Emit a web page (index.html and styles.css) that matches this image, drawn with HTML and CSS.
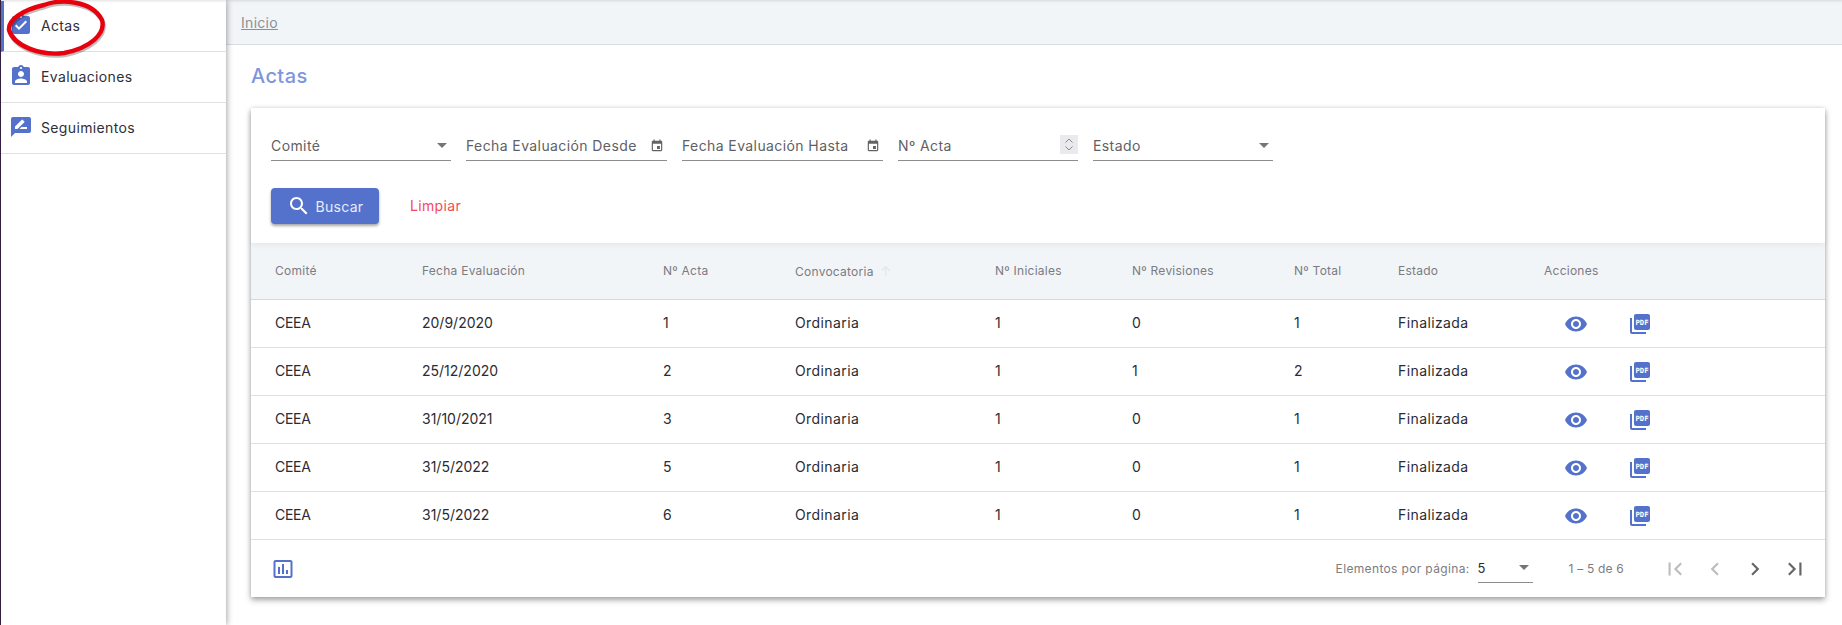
FILE: index.html

```html
<!DOCTYPE html>
<html>
<head>
<meta charset="utf-8">
<title>Actas</title>
<link rel="stylesheet" href="styles.css">
</head>
<body>
<svg class="defs" width="0" height="0">
    <symbol id="i-done" viewBox="0 0 24 24"><path d="M19 3h-4.18C14.4 1.84 13.3 1 12 1c-1.3 0-2.4.84-2.82 2H5c-1.1 0-2 .9-2 2v14c0 1.1.9 2 2 2h14c1.1 0 2-.9 2-2V5c0-1.1-.9-2-2-2zm-7 0c.55 0 1 .45 1 1s-.45 1-1 1-1-.45-1-1 .45-1 1-1zm-2 14l-4-4 1.41-1.41L10 14.17l6.59-6.59L18 9l-8 8z"/></symbol>
    <symbol id="i-ind" viewBox="0 0 24 24"><path d="M19 3h-4.18C14.4 1.84 13.3 1 12 1c-1.3 0-2.4.84-2.82 2H5c-1.1 0-2 .9-2 2v14c0 1.1.9 2 2 2h14c1.1 0 2-.9 2-2V5c0-1.1-.9-2-2-2zm-7 0c.55 0 1 .45 1 1s-.45 1-1 1-1-.45-1-1 .45-1 1-1zm0 4c1.66 0 3 1.34 3 3s-1.34 3-3 3-3-1.34-3-3 1.34-3 3-3zm6 12H6v-1.4c0-2 4-3.1 6-3.1s6 1.1 6 3.1V19z"/></symbol>
    <symbol id="i-review" viewBox="0 0 24 24"><path d="M20 2H4c-1.1 0-2 .9-2 2v18l4-4h14c1.1 0 2-.9 2-2V4c0-1.1-.9-2-2-2zM6 14v-2.47l6.88-6.88c.2-.2.51-.2.71 0l1.77 1.77c.2.2.2.51 0 .71L8.47 14H6zm12 0h-7.5l2-2H18v2z"/></symbol>
    <symbol id="i-event" viewBox="0 0 24 24"><path d="M17 12h-5v5h5v-5zM16 1v2H8V1H6v2H5c-1.11 0-1.99.9-1.99 2L3 19c0 1.1.89 2 2 2h14c1.1 0 2-.9 2-2V5c0-1.1-.9-2-2-2h-1V1h-2zm3 18H5V8h14v11z"/></symbol>
    <symbol id="i-eye" viewBox="0 0 24 24"><path d="M12 4.5C7 4.5 2.73 7.61 1 12c1.73 4.39 6 7.5 11 7.5s9.27-3.11 11-7.5c-1.73-4.39-6-7.5-11-7.5zM12 17c-2.76 0-5-2.24-5-5s2.24-5 5-5 5 2.24 5 5-2.24 5-5 5zm0-8c-1.66 0-3 1.34-3 3s1.34 3 3 3 3-1.34 3-3-1.34-3-3-3z"/></symbol>
    <symbol id="i-pdf" viewBox="0 0 24 24"><path d="M20 2H8c-1.1 0-2 .9-2 2v12c0 1.1.9 2 2 2h12c1.1 0 2-.9 2-2V4c0-1.1-.9-2-2-2zM4 6H2v14c0 1.1.9 2 2 2h14v-2H4V6z"/></symbol>
</svg>

<div class="sidebar">
    <a class="side-item active"><svg class="side-icon"><use href="#i-done"/></svg>Actas</a>
    <a class="side-item"><svg class="side-icon"><use href="#i-ind"/></svg>Evaluaciones</a>
    <a class="side-item"><svg class="side-icon"><use href="#i-review"/></svg>Seguimientos</a>
</div>

<svg class="circled" width="112" height="60" viewBox="0 0 112 60">
    <path class="circled-shadow" d="M44 5 C60 -1 92 0 102 20 C106 34 90 48 64 53 C40 56 14 46 9 30 C8 20 22 10 44 5"/>
    <path class="circled-line" d="M44 5 C60 -1 92 0 102 20 C106 34 90 48 64 53 C40 56 14 46 9 30 C8 20 22 10 44 5"/>
</svg>

<div class="main">
    <div class="breadcrumb"><a>Inicio</a></div>
    <h1 class="title">Actas</h1>

    <div class="card">
        <div class="filters">
            <div class="filter-row">
                <div class="field w-comite"><span>Comité</span><i class="caret"></i></div>
                <div class="field w-desde"><span>Fecha Evaluación Desde</span><svg class="cal"><use href="#i-event"/></svg></div>
                <div class="field w-hasta"><span>Fecha Evaluación Hasta</span><svg class="cal"><use href="#i-event"/></svg></div>
                <div class="field w-acta"><span>Nº Acta</span>
                    <svg class="spin" viewBox="0 0 18 19"><path d="M5.5 7.5 9 4 12.5 7.5M5.5 11.5 9 15 12.5 11.5"/></svg>
                </div>
                <div class="field w-estado"><span>Estado</span><i class="caret"></i></div>
            </div>
            <div class="btn-row">
                <button class="btn-search">
                    <svg viewBox="0 0 24 24"><path d="M15.5 14h-.79l-.28-.27C15.41 12.59 16 11.11 16 9.5 16 5.91 13.09 3 9.5 3S3 5.91 3 9.5 5.91 16 9.5 16c1.61 0 3.09-.59 4.23-1.57l.27.28v.79l5 4.99L20.49 19l-4.99-5zm-6 0C7.01 14 5 11.99 5 9.5S7.01 5 9.5 5 14 7.01 14 9.5 11.99 14 9.5 14z"/></svg>
                    Buscar
                </button>
                <button class="btn-clear">Limpiar</button>
            </div>
        </div>

        <table class="grid">
            <colgroup>
                <col class="c1"><col class="c2"><col class="c3"><col class="c4"><col class="c5">
                <col class="c6"><col class="c7"><col class="c8"><col class="c9"><col>
            </colgroup>
            <thead>
                <tr>
                    <th>Comité</th>
                    <th>Fecha Evaluación</th>
                    <th>Nº Acta</th>
                    <th>Convocatoria <span class="sort">↑</span></th>
                    <th>Nº Iniciales</th>
                    <th>Nº Revisiones</th>
                    <th>Nº Total</th>
                    <th>Estado</th>
                    <th>Acciones</th>
                    <th></th>
                </tr>
            </thead>
            <tbody>
                <tr>
                    <td>CEEA</td><td>20/9/2020</td><td>1</td><td>Ordinaria</td><td>1</td><td>0</td><td>1</td><td>Finalizada</td>
                    <td class="acts"><svg class="eye"><use href="#i-eye"/></svg></td>
                    <td class="acts"><svg class="pdf" viewBox="0 0 24 24"><use href="#i-pdf"/><text class="pdf-text" x="14" y="12.6">PDF</text></svg></td>
                </tr>
                <tr>
                    <td>CEEA</td><td>25/12/2020</td><td>2</td><td>Ordinaria</td><td>1</td><td>1</td><td>2</td><td>Finalizada</td>
                    <td class="acts"><svg class="eye"><use href="#i-eye"/></svg></td>
                    <td class="acts"><svg class="pdf" viewBox="0 0 24 24"><use href="#i-pdf"/><text class="pdf-text" x="14" y="12.6">PDF</text></svg></td>
                </tr>
                <tr>
                    <td>CEEA</td><td>31/10/2021</td><td>3</td><td>Ordinaria</td><td>1</td><td>0</td><td>1</td><td>Finalizada</td>
                    <td class="acts"><svg class="eye"><use href="#i-eye"/></svg></td>
                    <td class="acts"><svg class="pdf" viewBox="0 0 24 24"><use href="#i-pdf"/><text class="pdf-text" x="14" y="12.6">PDF</text></svg></td>
                </tr>
                <tr>
                    <td>CEEA</td><td>31/5/2022</td><td>5</td><td>Ordinaria</td><td>1</td><td>0</td><td>1</td><td>Finalizada</td>
                    <td class="acts"><svg class="eye"><use href="#i-eye"/></svg></td>
                    <td class="acts"><svg class="pdf" viewBox="0 0 24 24"><use href="#i-pdf"/><text class="pdf-text" x="14" y="12.6">PDF</text></svg></td>
                </tr>
                <tr>
                    <td>CEEA</td><td>31/5/2022</td><td>6</td><td>Ordinaria</td><td>1</td><td>0</td><td>1</td><td>Finalizada</td>
                    <td class="acts"><svg class="eye"><use href="#i-eye"/></svg></td>
                    <td class="acts"><svg class="pdf" viewBox="0 0 24 24"><use href="#i-pdf"/><text class="pdf-text" x="14" y="12.6">PDF</text></svg></td>
                </tr>
            </tbody>
        </table>

        <div class="foot">
            <svg class="chart" viewBox="0 0 24 24"><path d="M9 17H7v-7h2v7zm4 0h-2V7h2v10zm4 0h-2v-4h2v4zm2.5 2.1h-15V5h15v14.1zm0-16.1h-15c-1.1 0-2 .9-2 2v14c0 1.1.9 2 2 2h15c1.1 0 2-.9 2-2V5c0-1.1-.9-2-2-2z"/></svg>
            <div class="pager">
                <span class="per-page">Elementos por página:</span>
                <div class="page-size"><span>5</span><i class="caret"></i></div>
                <span class="range">1 – 5 de 6</span>
                <svg class="nav off" viewBox="0 0 24 24"><path d="M18.41 16.59L13.82 12l4.59-4.59L17 6l-6 6 6 6zM6 6h2v12H6z"/></svg>
                <svg class="nav off" viewBox="0 0 24 24"><path d="M15.41 7.41L14 6l-6 6 6 6 1.41-1.41L10.83 12z"/></svg>
                <svg class="nav" viewBox="0 0 24 24"><path d="M10 6L8.59 7.41 13.17 12l-4.58 4.59L10 18l6-6z"/></svg>
                <svg class="nav" viewBox="0 0 24 24"><path d="M5.59 7.41L10.18 12l-4.59 4.59L7 18l6-6-6-6zM16 6h2v12h-2z"/></svg>
            </div>
        </div>
    </div>
</div>
</body>
</html>
```

FILE: styles.css

```css
* {
    box-sizing: border-box;
}
html, body {
    height: 100%;
}
body {
    margin: 0;
    display: flex;
    height: 625px;
    overflow: hidden;
    background: #fff;
    color: #2b2b33;
    font-family: Inter, "Noto Sans", Arial, sans-serif;
    font-size: 14px;
}
.defs {
    position: absolute;
}

/* side menu */
.sidebar {
    width: 226px;
    flex: none;
    padding-top: 1px;
    border-left: 1px solid #33203f;
    background: #fff;
    box-shadow: 1px 0 6px rgba(0,0,0,.35), inset 0 3px 3px -2px rgba(0,0,0,.12);
    position: relative;
    z-index: 2;
}
.side-item {
    display: flex;
    align-items: center;
    height: 51px;
    padding: 0 0 2px 8px;
    gap: 8px;
    border-bottom: 1px solid #e0e0e0;
    font-size: 14px;
    letter-spacing: .35px;
    color: #2f2f38;
}
.side-item.active {
    border-left: 3px solid #5472cc;
    padding-left: 5px;
}
.side-icon {
    width: 24px;
    height: 24px;
    fill: #5472cc;
}

/* red hand drawn ring */
.circled {
    position: absolute;
    left: 0;
    top: 0;
    z-index: 5;
}
.circled path {
    fill: none;
    stroke-linecap: round;
}
.circled-line {
    stroke: #e8000d;
    stroke-width: 4.4;
}
.circled-shadow {
    stroke: rgba(0,0,0,.25);
    stroke-width: 4.4;
    transform: translate(1px, 2px);
}

.main {
    flex: 1;
    min-width: 0;
    padding-right: 17px;
}
.breadcrumb {
    height: 45px;
    margin-right: -17px;
    padding: 14px 0 0 15px;
    background: #f2f5f8;
    border-bottom: 1px solid #d9dee3;
    box-shadow: inset 0 3px 3px -2px rgba(0,0,0,.12);
    font-size: 14px;
    letter-spacing: .3px;
    color: #8b8f96;
}
.breadcrumb a {
    text-decoration: underline;
}
.title {
    margin: 19px 0 20px 25px;
    font-size: 20px;
    line-height: 24px;
    font-weight: 500;
    letter-spacing: .4px;
    color: #7e96dc;
}

.card {
    margin-left: 25px;
    background: #fff;
    box-shadow: 0 3px 6px rgba(0,0,0,.35), 0 0 4px rgba(0,0,0,.1);
}
.filters {
    height: 135px;
    padding: 0 20px;
    box-shadow: 0 2px 6px rgba(0,0,0,.06);
    position: relative;
}
.filter-row {
    display: flex;
    gap: 15px;
    padding-top: 21px;
}
.field {
    height: 32px;
    padding-top: 2px;
    display: flex;
    align-items: center;
    justify-content: space-between;
    border-bottom: 1px solid #8c8c8c;
    font-size: 14px;
    letter-spacing: .4px;
    color: #5f5f64;
}
.w-comite { width: 180px; padding-right: 4px; }
.w-desde { width: 201px; padding-right: 3px; }
.w-hasta { width: 201px; padding-right: 3px; }
.w-acta { width: 180px; }
.w-estado { width: 180px; padding-right: 4px; }
.caret {
    width: 0;
    height: 0;
    border-left: 5px solid transparent;
    border-right: 5px solid transparent;
    border-top: 5px solid #757575;
}
.cal {
    width: 14px;
    height: 14px;
    fill: #636363;
}
.spin {
    width: 18px;
    height: 19px;
    margin-bottom: 2px;
    background: #e9e9ee;
    fill: none;
    stroke: #8a8a8a;
    stroke-width: 1;
}
.btn-row {
    display: flex;
    align-items: center;
    margin-top: 27px;
}
.btn-search {
    width: 108px;
    height: 36px;
    display: flex;
    align-items: center;
    justify-content: center;
    gap: 5px;
    border: 0;
    border-radius: 4px;
    background: #5472cc;
    color: #e8ecf8;
    font: inherit;
    letter-spacing: .3px;
    box-shadow: 0 2px 3px rgba(0,0,0,.35);
}
.btn-search svg {
    width: 24px;
    height: 24px;
    fill: #fff;
}
.btn-clear {
    margin-left: 31px;
    padding: 0 0 2px;
    border: 0;
    background: none;
    color: #f44a57;
    font: inherit;
    letter-spacing: .35px;
}

/* table */
.grid {
    width: 100%;
    border-collapse: collapse;
    table-layout: fixed;
}
.c1 { width: 147px; }
.c2 { width: 241px; }
.c3 { width: 132px; }
.c4 { width: 200px; }
.c5 { width: 137px; }
.c6 { width: 162px; }
.c7 { width: 104px; }
.c8 { width: 146px; }
.c9 { width: 86px; }
.grid th {
    height: 56px;
    padding: 0 0 0 24px;
    background: #f2f5f8;
    border-bottom: 1px solid #d5d9dd;
    text-align: left;
    font-size: 12px;
    font-weight: 400;
    letter-spacing: .25px;
    color: #7b7b82;
}
.sort {
    color: #e1e5e9;
    font-size: 13px;
    margin-left: 3px;
}
.grid td {
    height: 48px;
    padding: 0 0 2px 24px;
    border-bottom: 1px solid #e0e0e0;
    font-size: 14px;
    color: #2b2b33;
}
.grid td:nth-child(1) {
    letter-spacing: -.3px;
}
.grid td:nth-child(4), .grid td:nth-child(8) {
    letter-spacing: .4px;
}
.grid td.acts {
    padding: 1px 0 0 0;
}
.eye {
    display: block;
    width: 24px;
    height: 24px;
    margin-left: 44px;
    fill: #5472cc;
}
.pdf {
    display: block;
    width: 24px;
    height: 24px;
    margin-left: 22px;
    fill: #5472cc;
}
.pdf-text {
    fill: #fff;
    font-family: "DejaVu Sans Mono", monospace;
    font-size: 7.2px;
    font-weight: 700;
    text-anchor: middle;
}

.foot {
    height: 57px;
    display: flex;
    align-items: center;
    justify-content: space-between;
    padding: 0 17px 0 20px;
}
.chart {
    width: 24px;
    height: 24px;
    margin-top: 2px;
    fill: #5472cc;
}
.pager {
    display: flex;
    align-items: center;
    font-size: 12px;
    color: #7c7c82;
}
.per-page {
    letter-spacing: .35px;
}
.page-size {
    width: 55px;
    height: 30px;
    margin: 0 0 0 8px;
    display: flex;
    align-items: center;
    justify-content: space-between;
    padding-right: 4px;
    border-bottom: 1px solid #8c8c8c;
    font-size: 13px;
    color: #2b2b33;
}
.range {
    margin: 0 38px 0 36px;
    letter-spacing: .2px;
}
.nav {
    width: 26px;
    height: 26px;
    margin-top: 2px;
    margin-left: 14px;
    fill: #666;
}
.nav.off {
    fill: #bdbdbd;
}
.nav:first-of-type {
    margin-left: 0;
}
```
